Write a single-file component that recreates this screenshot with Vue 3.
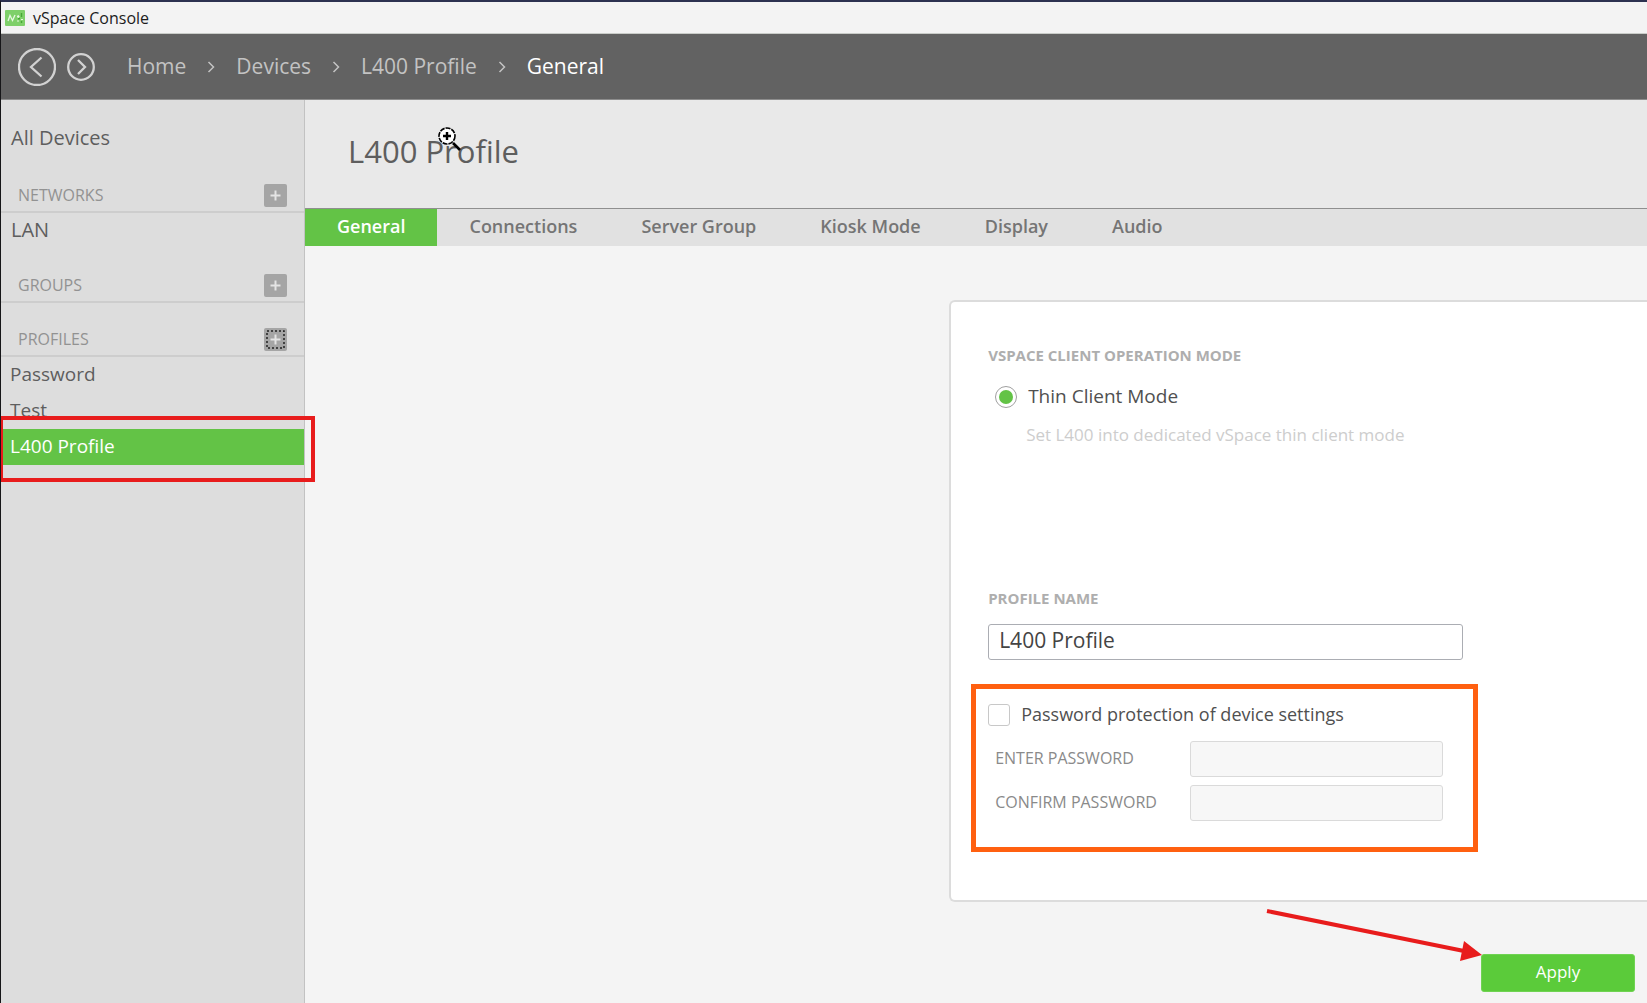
<template>
  <div class="window">
    <header class="titlebar">
      <svg class="app-icon" width="20" height="16" viewBox="0 0 20 16">
        <rect width="20" height="16" rx="1" fill="#7ed069" />
        <path d="M3 11 L5 5.5 L7.5 10.5 L10 5" fill="none" stroke="#e6f8e0" stroke-width="1.3" />
        <path d="M12 6.5h2.5M13.2 5v3M16 9.5h2M12 11h2" stroke="#e6f8e0" stroke-width="1.2" />
        <path d="M16.5 3v4M13 8.8h2M16.5 11v2" stroke="#46a834" stroke-width="1.4" />
      </svg>
      <span>vSpace Console</span>
    </header>

    <nav class="toolbar" aria-label="Breadcrumb">
      <button class="nav-button" type="button" aria-label="Back">
        <svg width="38" height="38" viewBox="0 0 38 38">
          <circle cx="19" cy="19" r="18" />
          <path d="M23.5 9.5 L13 19 L23.5 28.5" />
        </svg>
      </button>
      <button class="nav-button forward" type="button" aria-label="Forward">
        <svg width="28" height="28" viewBox="0 0 28 28">
          <circle cx="14" cy="14" r="12.8" />
          <path d="M11 7 L18 14 L11 21" />
        </svg>
      </button>
      <ol class="crumbs">
        <li v-for="(crumb, i) in crumbs" :key="crumb">
          <svg v-if="i > 0" class="chevron" width="8" height="12" viewBox="0 0 8 12">
            <path d="M1.5 1 L6.5 6 L1.5 11" />
          </svg>
          <a href="#" :class="{ current: i === crumbs.length - 1 }">{{ crumb }}</a>
        </li>
      </ol>
    </nav>

    <div class="body">
      <aside class="sidebar">
        <a class="row all-devices" href="#">All Devices</a>
        <section v-for="section in sections" :key="section.title" class="section">
          <div class="section-head">
            <h2>{{ section.title }}</h2>
            <button class="add" :class="{ focused: section.focused }" type="button" :aria-label="'Add to ' + section.title">
              <svg width="23" height="23" viewBox="0 0 23 23">
                <path class="plus" d="M11.5 6.5v10M6.5 11.5h10" />
                <rect v-if="section.focused" class="focus-ring" x="3" y="3" width="17" height="17" />
              </svg>
            </button>
          </div>
          <a
            v-for="item in section.items"
            :key="item"
            class="row"
            :class="{ compact: section.compact, selected: item === selectedItem }"
            href="#"
            @click.prevent="selectedItem = item"
          >{{ item }}</a>
        </section>
        <div class="highlight-box"></div>
      </aside>

      <main class="main">
        <div class="page-head">
          <h1>L400 Profile</h1>
          <svg class="zoom-cursor" width="24" height="25" viewBox="0 0 24 25">
            <path d="M15 16 L22 23" stroke="#000" stroke-width="2.6" />
            <circle cx="9" cy="9" r="8" fill="#fff" stroke="#000" stroke-width="1.6" stroke-dasharray="5 1" />
            <path d="M9 5v8M5 9h8" stroke="#000" stroke-width="2.4" />
          </svg>
        </div>

        <div class="tabs" role="tablist">
          <button
            v-for="tab in tabs"
            :key="tab"
            class="tab"
            :class="{ active: tab === activeTab }"
            type="button"
            role="tab"
            :aria-selected="tab === activeTab"
            @click="activeTab = tab"
          >{{ tab }}</button>
        </div>

        <form class="content" @submit.prevent>
          <div class="card">
            <h3>VSPACE CLIENT OPERATION MODE</h3>
            <div class="mode">
              <input id="thin" v-model="mode" type="radio" name="mode" value="thin" />
              <label for="thin">Thin Client Mode</label>
            </div>
            <p class="hint">Set L400 into dedicated vSpace thin client mode</p>

            <label class="field-title" for="profile-name">PROFILE NAME</label>
            <input id="profile-name" v-model="profileName" class="text-input name-input" type="text" />

            <div class="password-box">
              <div class="protect">
                <input id="protect" v-model="isProtected" type="checkbox" />
                <label for="protect">Password protection of device settings</label>
              </div>
              <div class="password-row">
                <label for="password">ENTER PASSWORD</label>
                <input id="password" class="text-input" type="password" :disabled="!isProtected" />
              </div>
              <div class="password-row">
                <label for="confirm">CONFIRM PASSWORD</label>
                <input id="confirm" class="text-input" type="password" :disabled="!isProtected" />
              </div>
            </div>
          </div>

          <div class="actions">
            <button class="apply" type="submit">Apply</button>
            <svg class="arrow" width="216" height="56" viewBox="0 0 216 56">
              <path d="M1 5 L198 45" stroke="#e81c1c" stroke-width="4" />
              <path d="M198 35 L216 49 L194 55 Z" fill="#e81c1c" />
            </svg>
          </div>
        </form>
      </main>
    </div>
  </div>
</template>

<script setup>
import { ref } from 'vue'

const crumbs = ['Home', 'Devices', 'L400 Profile', 'General']
const tabs = ['General', 'Connections', 'Server Group', 'Kiosk Mode', 'Display', 'Audio']
const sections = [
  { title: 'NETWORKS', items: ['LAN'] },
  { title: 'GROUPS', items: [] },
  { title: 'PROFILES', items: ['Password', 'Test', 'L400 Profile'], compact: true, focused: true }
]

const selectedItem = ref('L400 Profile')
const activeTab = ref('General')
const mode = ref('thin')
const profileName = ref('L400 Profile')
const isProtected = ref(false)
</script>

<style>
body {
  margin: 0;
}
</style>

<style scoped>
* {
  box-sizing: border-box;
}

.window {
  display: flex;
  flex-direction: column;
  min-height: 100vh;
  overflow: hidden;
  border-top: 2px solid #2c3150;
  border-left: 1px solid #161618;
  background: #f4f4f4;
  color: #5e5e5e;
  font-family: 'Open Sans', 'Noto Sans', sans-serif;
  font-size: 20px;
}

h1, h2, h3, p, ol {
  margin: 0;
  padding: 0;
}

a {
  color: inherit;
  text-decoration: none;
}

button, input {
  margin: 0;
  font-family: inherit;
}

.titlebar {
  display: flex;
  align-items: center;
  gap: 8px;
  height: 32px;
  padding-left: 4px;
  border-bottom: 1px solid #c9ccc8;
  background: #f3f3f3;
  color: #1c1c1c;
  font-size: 16px;
}

.toolbar {
  display: flex;
  align-items: center;
  height: 66px;
  padding-left: 17px;
  border-bottom: 1px solid #8c8c8c;
  background: #626262;
}

.nav-button {
  display: flex;
  padding: 0;
  border: 0;
  background: none;
}

.nav-button svg {
  fill: none;
  stroke: #d2d2d2;
  stroke-width: 2.3;
}

.forward {
  margin-left: 11px;
}

.crumbs {
  display: flex;
  margin-left: 32px;
  padding-bottom: 2px;
  list-style: none;
  color: #c3c3c3;
  font-size: 21px;
  line-height: 28px;
}

.crumbs li {
  display: flex;
  align-items: center;
}

.chevron {
  margin: 2px 21px 0;
  fill: none;
  stroke: #c3c3c3;
  stroke-width: 1.5;
}

.current {
  color: #fff;
  font-weight: 500;
}

.body {
  display: flex;
  flex: 1;
}

/* Sidebar */
.sidebar {
  position: relative;
  flex: none;
  width: 304px;
  padding-top: 21px;
  border-right: 1px solid #c2c2c2;
  background: #dddddd;
}

.row {
  display: block;
  height: 36px;
  padding: 0 10px 2px;
  line-height: 34px;
}

.compact {
  padding-left: 9px;
  font-size: 19px;
}

.all-devices {
  margin-bottom: 2px;
}

.selected {
  background: #63c346;
  color: #fff;
}

.section {
  padding-top: 18px;
}

.section-head {
  display: flex;
  align-items: center;
  justify-content: space-between;
  height: 36px;
  padding: 2px 17px 0;
  border-bottom: 2px solid #cdcdcd;
}

.section-head h2 {
  color: #929292;
  font-size: 16px;
  font-weight: 400;
}

.add {
  display: flex;
  padding: 0;
  border: 0;
  border-radius: 2px;
  background: #a5a5a5;
}

.plus {
  stroke: #e4e4e4;
  stroke-width: 2;
}

.focus-ring {
  fill: none;
  stroke: #222;
  stroke-width: 1.5;
  stroke-dasharray: 2 2;
}

.highlight-box {
  position: absolute;
  top: 316px;
  left: -2px;
  width: 316px;
  height: 66px;
  border: 4px solid #e81c1c;
}

/* Main area */
.main {
  display: flex;
  flex: 1;
  flex-direction: column;
  min-width: 0;
}

.page-head {
  position: relative;
  height: 109px;
  padding: 30px 0 0 43px;
  border-bottom: 1px solid #8f8f8f;
  background: #e9e9e9;
}

h1 {
  font-size: 31px;
  font-weight: 400;
  line-height: 42px;
}

.zoom-cursor {
  position: absolute;
  top: 27px;
  left: 133px;
}

.tabs {
  display: flex;
  height: 37px;
  background: #e1e1e1;
}

.tab {
  padding: 0 32px 3px;
  border: 0;
  background: none;
  color: #757575;
  font-size: 18px;
  font-weight: 600;
}

.tab.active {
  background: #63c346;
  color: #fff;
}

.content {
  flex: 1;
  padding: 54px 0 11px 48%;
}

.card {
  display: flex;
  flex-direction: column;
  align-items: flex-start;
  padding: 41px 0 48px 37px;
  border: 2px solid #dcdcdc;
  border-right: 0;
  border-radius: 6px 0 0 6px;
  background: #fff;
}

h3, .field-title {
  color: #aeaeae;
  font-size: 15px;
  font-weight: 700;
  line-height: 24px;
}

.mode, .protect {
  display: flex;
  align-items: center;
  height: 28px;
  color: #505050;
}

.mode label, .protect label {
  padding-bottom: 2px;
}

.mode {
  gap: 11px;
  margin-top: 16px;
  padding-left: 7px;
  font-size: 19px;
}

.mode input {
  appearance: none;
  width: 22px;
  height: 22px;
  border: 1px solid #a0a0a0;
  border-radius: 50%;
  background: #fff;
}

.mode input:checked {
  padding: 3px;
  background: #63c346 content-box;
}

.hint {
  margin-top: 12px;
  padding-left: 38px;
  color: #cdcdcd;
  font-size: 17px;
  line-height: 24px;
}

.field-title {
  margin-top: 139px;
}

.text-input {
  height: 36px;
  padding: 0 10px 4px;
  border: 1px solid #abadb3;
  border-radius: 3px;
  outline: 0;
  background: #fff;
  color: #444;
  font-size: 21px;
}

.text-input:disabled {
  border-color: #dadada;
  background: #f7f7f7;
}

.name-input {
  width: 475px;
  margin-top: 14px;
}

.password-box {
  width: 507px;
  margin: 24px 0 0 -17px;
  padding: 12px 12px 26px;
  border: 5px solid #ff6010;
}

.protect {
  gap: 11px;
  font-size: 18px;
}

.protect input {
  appearance: none;
  width: 22px;
  height: 22px;
  border: 1px solid #c8c8c8;
  border-radius: 3px;
  background: #fff;
}

.protect input:checked {
  background: #63c346;
}

.password-row {
  display: flex;
  align-items: center;
  margin-top: 8px;
  padding-left: 7px;
}

.protect + .password-row {
  margin-top: 12px;
}

.password-row label {
  width: 195px;
  padding-bottom: 2px;
  color: #8a8a8a;
  font-size: 16px;
}

.password-row input {
  width: 253px;
}

.actions {
  position: relative;
  display: flex;
  justify-content: flex-end;
  margin-top: 52px;
  padding-right: 12px;
}

.apply {
  width: 154px;
  height: 38px;
  padding: 0 0 3px;
  border: 1px solid #6fd352;
  border-radius: 3px;
  background: #5bcb3a;
  color: #fff;
  font-size: 17px;
}

.arrow {
  position: absolute;
  top: -48px;
  right: 165px;
}
</style>
